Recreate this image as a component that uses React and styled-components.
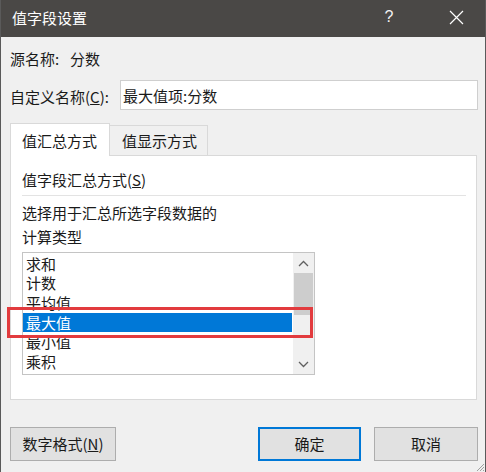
import React from 'react';
import styled, { createGlobalStyle } from 'styled-components';

const GlobalStyle = createGlobalStyle`
  html, body {
    margin: 0;
    padding: 0;
    background: #f0f0f0;
  }
  body {
    font-family: "Noto Sans CJK SC", "Microsoft YaHei", sans-serif;
    font-size: 15px;
    color: #1a1a1a;
  }
  * { box-sizing: border-box; }
`;

const items = ['求和', '计数', '平均值', '最大值', '最小值', '乘积'];
const SELECTED = 3;

function App() {
  return (
    <Window>
      <GlobalStyle />
      <TitleBar>
        <Title>值字段设置</Title>
        <HelpButton>?</HelpButton>
        <CloseButton>
          <svg width="15" height="15" viewBox="0 0 15 15">
            <path d="M1 1 L14 14 M14 1 L1 14" stroke="#fff" strokeWidth="1.2" fill="none" />
          </svg>
        </CloseButton>
      </TitleBar>

      <Body>
        <SourceRow>
          <SourceLabel>源名称:</SourceLabel>
          <span>分数</span>
        </SourceRow>

        <NameRow>
          <NameLabel>自定义名称(<u>C</u>):</NameLabel>
          <NameInput defaultValue="最大值项:分数" />
        </NameRow>

        <TabStrip>
          <Tab $active>值汇总方式</Tab>
          <Tab>值显示方式</Tab>
        </TabStrip>

        <Panel>
          <GroupTitle>值字段汇总方式(<u>S</u>)</GroupTitle>
          <Separator />
          <Hint>选择用于汇总所选字段数据的<br />计算类型</Hint>

          <ListBox>
            <ListItems>
              {items.map((it, i) => (
                <ListItem key={it} $selected={i === SELECTED}>{it}</ListItem>
              ))}
            </ListItems>
            <ScrollBar>
              <ScrollArrow>
                <svg width="11" height="7" viewBox="0 0 11 7">
                  <polyline points="1,6 5.5,1.5 10,6" stroke="#606060" strokeWidth="1.3" fill="none" />
                </svg>
              </ScrollArrow>
              <ScrollTrack>
                <Thumb />
              </ScrollTrack>
              <ScrollArrow>
                <svg width="11" height="7" viewBox="0 0 11 7">
                  <polyline points="1,1 5.5,5.5 10,1" stroke="#606060" strokeWidth="1.3" fill="none" />
                </svg>
              </ScrollArrow>
            </ScrollBar>
          </ListBox>
        </Panel>

        <ButtonRow>
          <Button $width={106}>数字格式(<u>N</u>)</Button>
          <Spacer />
          <Button $width={103} $primary>确定</Button>
          <Button $width={104}>取消</Button>
        </ButtonRow>
      </Body>

      <Highlight />
      <Grip>
        <svg width="10" height="10" viewBox="0 0 10 10">
          <path d="M9 2 L2 9 M9 5 L5 9 M9 8 L8 9" stroke="#a0a0a0" strokeWidth="1" fill="none" />
        </svg>
      </Grip>
    </Window>
  );
}

export default App;

const Window = styled.div`
  position: relative;
  width: 486px;
  height: 472px;
  background: #f0f0f0;
  border-left: 1px solid #5a5a5a;
  border-right: 1px solid #5a5a5a;
  display: flex;
  flex-direction: column;
  overflow: hidden;
`;

const TitleBar = styled.div`
  height: 37px;
  flex: none;
  background: #4a4846;
  color: #fff;
  display: flex;
  align-items: center;
  padding-left: 11px;
`;

const Title = styled.div`
  font-size: 15px;
  line-height: 20px;
  margin-top: -2px;
`;

const HelpButton = styled.div`
  margin-left: auto;
  width: 30px;
  margin-right: 29px;
  text-align: center;
  font-family: "Liberation Sans", sans-serif;
  font-size: 16px;
  color: #f2f2f2;
  margin-top: -3px;
`;

const CloseButton = styled.div`
  width: 46px;
  margin-right: 6px;
  display: flex;
  justify-content: center;
  align-items: center;
  margin-top: -2px;
`;

const Body = styled.div`
  flex: 1;
  display: flex;
  flex-direction: column;
  padding: 0 7px 0 9px;
`;

const SourceRow = styled.div`
  margin-top: 11px;
  height: 22px;
  line-height: 22px;
  display: flex;
`;

const SourceLabel = styled.span`
  width: 60px;
`;

const NameRow = styled.div`
  margin-top: 10px;
  height: 30px;
  display: flex;
  align-items: center;
`;

const NameLabel = styled.span`
  width: 110px;
  line-height: 22px;
  margin-top: 4px;
  u { text-decoration-thickness: 1px; }
`;

const NameInput = styled.input`
  width: 358px;
  height: 30px;
  border: 1px solid #cfcfcf;
  background: #fff;
  padding: 0 0 0 2px;
  font: inherit;
  font-size: 15px;
  color: #1a1a1a;
  outline: none;
`;

const TabStrip = styled.div`
  margin-top: 13px;
  height: 32px;
  display: flex;
  align-items: flex-end;
  position: relative;
  z-index: 1;
`;

const Tab = styled.div`
  width: ${p => (p.$active ? '100px' : '98px')};
  height: ${p => (p.$active ? '33px' : '30px')};
  margin-bottom: ${p => (p.$active ? '-1px' : '0')};
  background: ${p => (p.$active ? '#fff' : '#f0f0f0')};
  border: 1px solid #d9d9d9;
  border-bottom: none;
  border-left: ${p => (p.$active ? '1px solid #d9d9d9' : 'none')};
  padding-left: ${p => (p.$active ? '11px' : '12px')};
  padding-top: ${p => (p.$active ? '7px' : '5px')};
  line-height: 20px;
`;

const Panel = styled.div`
  height: 245px;
  margin-right: 1px;
  background: #fff;
  border: 1px solid #d9d9d9;
  padding: 14px 10px 0 11px;
  display: flex;
  flex-direction: column;
`;

const GroupTitle = styled.div`
  line-height: 20px;
`;

const Separator = styled.div`
  margin-top: 5px;
  height: 1px;
  background: #e3e3e3;
`;

const Hint = styled.div`
  margin-top: 5px;
  line-height: 24px;
`;

const ListBox = styled.div`
  margin-top: 3px;
  width: 293px;
  height: 123px;
  border: 1px solid #c4c4c4;
  display: flex;
  overflow: hidden;
`;

const ListItems = styled.div`
  flex: 1;
  padding-top: 0.5px;
  display: flex;
  flex-direction: column;
`;

const ListItem = styled.div`
  height: 19.7px;
  line-height: 19.7px;
  padding-left: 3px;
  margin-right: 1px;
  background: ${p => (p.$selected ? '#0078d7' : 'transparent')};
  color: ${p => (p.$selected ? '#fff' : '#1a1a1a')};
`;

const ScrollBar = styled.div`
  width: 21px;
  background: #f0f0f0;
  display: flex;
  flex-direction: column;
`;

const ScrollArrow = styled.div`
  height: 20px;
  display: flex;
  align-items: center;
  justify-content: center;
`;

const ScrollTrack = styled.div`
  flex: 1;
  padding: 0 1px;
`;

const Thumb = styled.div`
  height: 42px;
  background: #cdcdcd;
`;

const ButtonRow = styled.div`
  margin-top: 27px;
  display: flex;
  gap: 13px;
`;

const Spacer = styled.div`
  flex: 1;
`;

const Button = styled.div`
  width: ${p => p.$width}px;
  height: 34px;
  background: #e1e1e1;
  border: ${p => (p.$primary ? '2px solid #0078d7' : '1px solid #adadad')};
  display: flex;
  align-items: center;
  justify-content: center;
  line-height: 20px;
  color: #1a1a1a;
`;

const Highlight = styled.div`
  position: absolute;
  left: 6px;
  top: 307px;
  width: 306px;
  height: 31px;
  border: 3px solid #e23b3e;
  pointer-events: none;
`;

const Grip = styled.div`
  position: absolute;
  right: 0;
  bottom: 0;
  width: 10px;
  height: 10px;
  display: flex;
`;
